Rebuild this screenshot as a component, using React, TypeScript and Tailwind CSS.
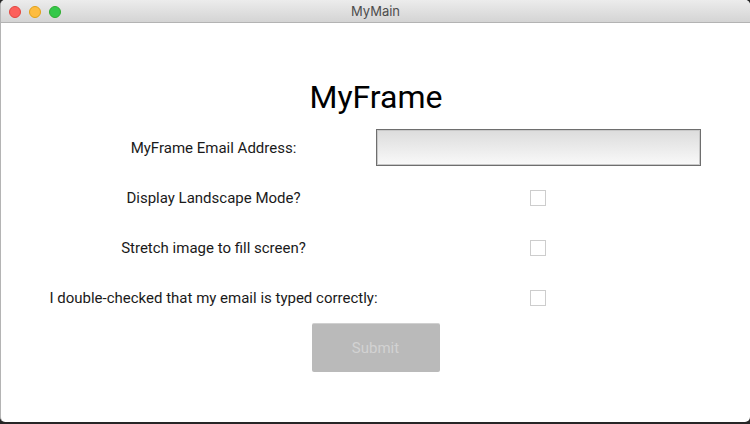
import React from "react";

function Row({ label, children }: { label: string; children: React.ReactNode }) {
  return (
    <div className="flex h-[37px] items-center">
      <div className="flex w-[425px] shrink-0 justify-center whitespace-nowrap text-[15px] leading-[20px] text-[#1a1a1a]">
        {label}
      </div>
      <div className="flex w-[224px] shrink-0 justify-center">{children}</div>
    </div>
  );
}

function Check() {
  return <div className="h-[16px] w-[16px] border border-[#cdcdcd] bg-white" />;
}

export default function App() {
  return (
    <div className="h-[424px] w-[750px] overflow-hidden bg-[#262626]" style={{ fontFamily: "Roboto, 'Noto Sans', sans-serif" }}>
      <div className="flex h-[422px] w-[750px] flex-col overflow-hidden rounded-[5px] border-l border-[#b4b4b4] bg-white">
        <div className="relative flex h-[23px] shrink-0 items-center justify-center border-b border-[#b3b3b3] bg-gradient-to-b from-[#ececec] to-[#d4d4d4]">
          <div className="absolute left-[8px] top-[6px] flex gap-[8px]">
            <div className="h-[12px] w-[12px] rounded-full border border-[#e2463f] bg-[#fc605c]" />
            <div className="h-[12px] w-[12px] rounded-full border border-[#e1a116] bg-[#fdbc40]" />
            <div className="h-[12px] w-[12px] rounded-full border border-[#2dac2f] bg-[#34c84a]" />
          </div>
          <span className="text-[13px] leading-[16px] text-[#4d4d4d]" style={{ fontFamily: "Inter, 'Liberation Sans', sans-serif" }}>
            MyMain
          </span>
        </div>
        <div className="mt-[56px] flex justify-center pl-[1px] text-[32px] leading-[37px] text-black">MyFrame</div>
        <div className="mt-[13px] flex flex-col gap-[13px]">
          <Row label="MyFrame Email Address:">
            <div className="ml-[1px] h-[37px] w-[325px] shrink-0 border border-[#6e6e6e] bg-gradient-to-b from-[#dcdcdc] to-[#f9f9f9] shadow-[inset_0_0_0_1px_#c8c8c8]" />
          </Row>
          <Row label="Display Landscape Mode?">
            <Check />
          </Row>
          <Row label="Stretch image to fill screen?">
            <Check />
          </Row>
          <Row label="I double-checked that my email is typed correctly:">
            <Check />
          </Row>
        </div>
        <div className="mt-[7px] flex justify-center">
          <div className="flex h-[49px] w-[128px] items-center justify-center rounded-[2px] border-t border-[#d0d0d0] bg-[#bababa] text-[15px] text-[#d2d2d2]">
            Submit
          </div>
        </div>
      </div>
    </div>
  );
}
